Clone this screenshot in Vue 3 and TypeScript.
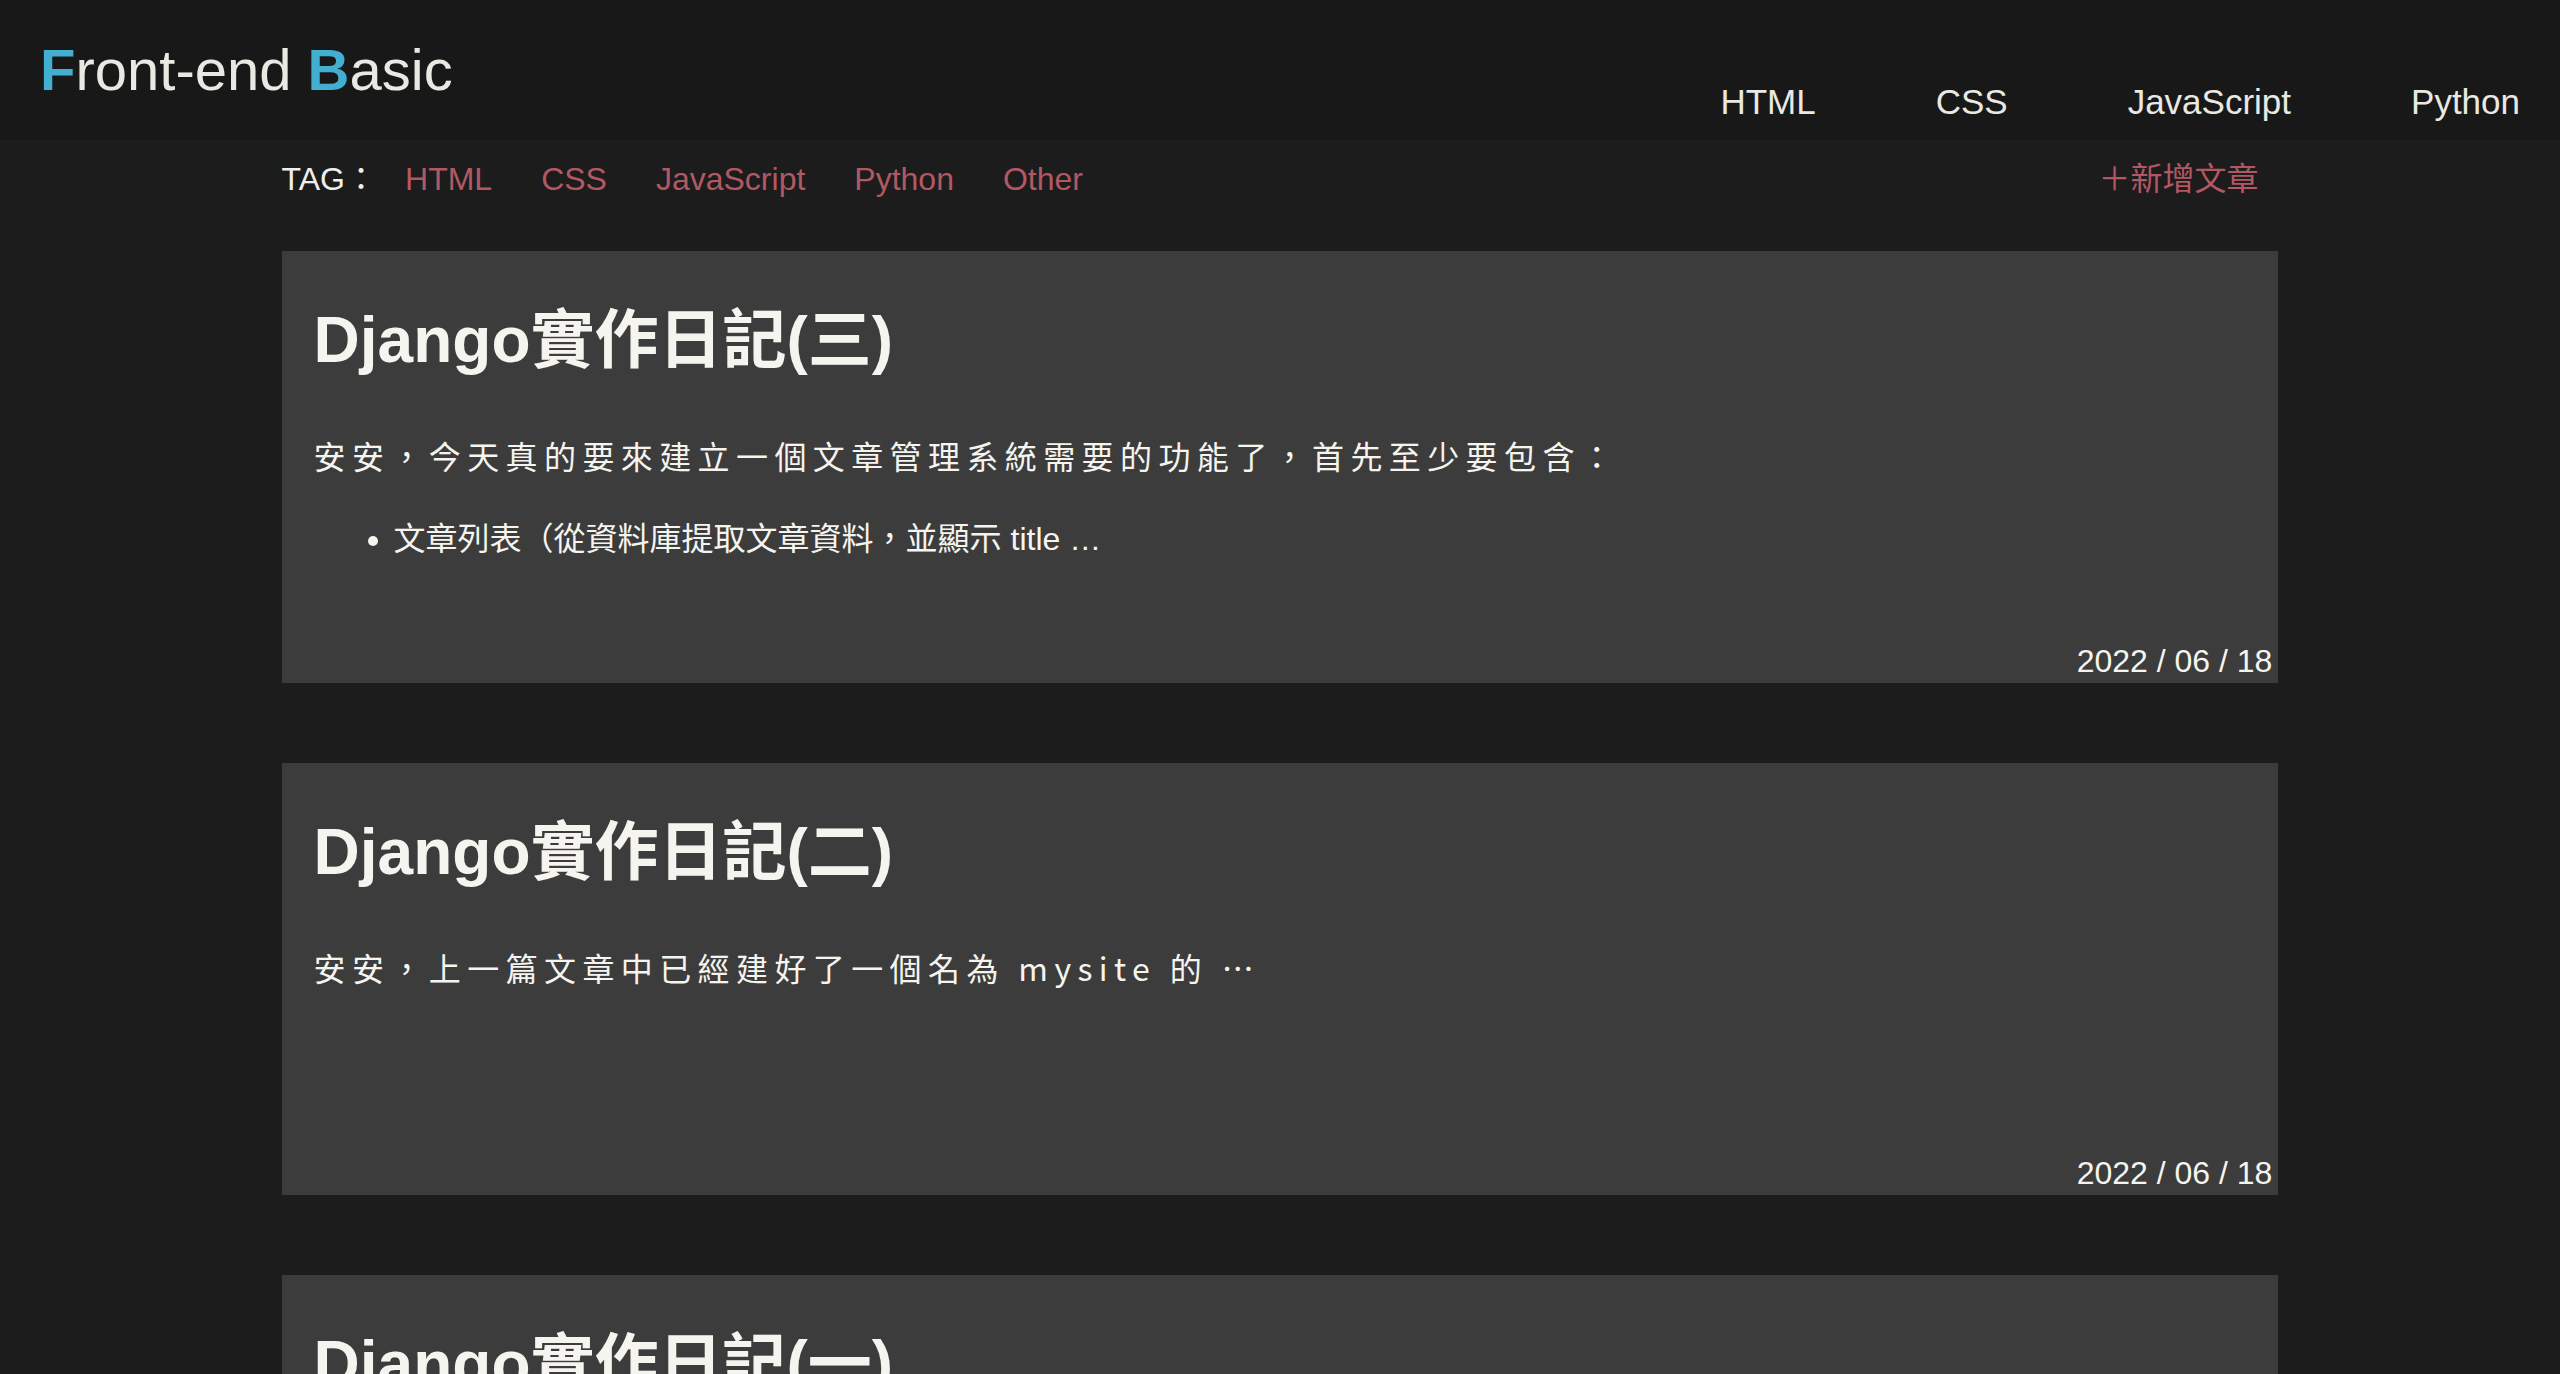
<script setup lang="ts">
interface Article {
  id: number
  title: string
  intro?: string
  points?: string[]
  date: string
}

const navItems: string[] = ['HTML', 'CSS', 'JavaScript', 'Python']
const tags: string[] = ['HTML', 'CSS', 'JavaScript', 'Python', 'Other']

const articles: Article[] = [
  {
    id: 3,
    title: 'Django實作日記(三)',
    intro: '安安，今天真的要來建立一個文章管理系統需要的功能了，首先至少要包含：',
    points: ['文章列表（從資料庫提取文章資料，並顯示 title …'],
    date: '2022 / 06 / 18',
  },
  {
    id: 2,
    title: 'Django實作日記(二)',
    intro: '安安，上一篇文章中已經建好了一個名為 mysite 的 …',
    date: '2022 / 06 / 18',
  },
  {
    id: 1,
    title: 'Django實作日記(一)',
    date: '2022 / 06 / 18',
  },
]
</script>

<template>
  <div class="page" lang="zh-Hant">
    <header class="header">
      <a class="logo" href="#"><b>F</b>ront-end <b>B</b>asic</a>
      <nav class="nav">
        <a v-for="item in navItems" :key="item" href="#">{{ item }}</a>
      </nav>
    </header>

    <main class="content">
      <div class="toolbar">
        <span class="label">TAG：</span>
        <nav class="tags">
          <a v-for="tag in tags" :key="tag" href="#">{{ tag }}</a>
        </nav>
        <a class="add" href="#">＋新增文章</a>
      </div>

      <div class="list">
        <article v-for="article in articles" :key="article.id" class="card">
          <h1>{{ article.title }}</h1>
          <p v-if="article.intro">{{ article.intro }}</p>
          <ul v-if="article.points">
            <li v-for="point in article.points" :key="point">{{ point }}</li>
          </ul>
          <time>{{ article.date }}</time>
        </article>
      </div>
    </main>
  </div>
</template>

<style>
body {
  background: #1c1c1c;
}
::-webkit-scrollbar {
  display: none;
}
</style>

<style scoped>
.page {
  font-family: "Liberation Sans", "Noto Sans CJK TC", sans-serif;
  font-size: 32px;
  line-height: 40px;
  color: #f5f4ef;
}
a {
  color: inherit;
  text-decoration: none;
}
.header {
  display: flex;
  justify-content: space-between;
  align-items: center;
  min-height: 140px;
  padding: 0 40px;
  box-sizing: border-box;
  background: #181818;
  color: #e9e8e3;
}
.logo {
  font-size: 58px;
  line-height: 72px;
}
.logo b {
  color: #42aed0;
}
.nav {
  display: flex;
  align-self: flex-end;
  gap: 120px;
  padding-bottom: 18px;
  font-size: 35px;
}
.content {
  width: 78%;
  margin: 0 auto;
}
.toolbar {
  display: flex;
  padding: 19px 20px 52px 0;
}
.label {
  color: #efefef;
}
.tags {
  display: flex;
  gap: 49px;
  margin-left: 28px;
}
.tags a,
.add {
  color: #b25863;
}
.add {
  margin-left: auto;
}
.list {
  display: flex;
  flex-direction: column;
  gap: 80px;
}
.card {
  display: flex;
  flex-direction: column;
  min-height: 432px;
  padding: 53px 6px 2px 32px;
  box-sizing: border-box;
  background: #3c3c3c;
}
h1 {
  margin: 0;
  font-size: 64px;
  line-height: 72px;
}
p {
  margin: 55px 0 0;
  font-family: "Noto Sans CJK TC", sans-serif;
  line-height: 48px;
  letter-spacing: 0.2em;
}
ul {
  margin: 36px 0 0;
  padding-left: 80px;
  line-height: 48px;
}
time {
  margin-top: auto;
  align-self: flex-end;
}
</style>
